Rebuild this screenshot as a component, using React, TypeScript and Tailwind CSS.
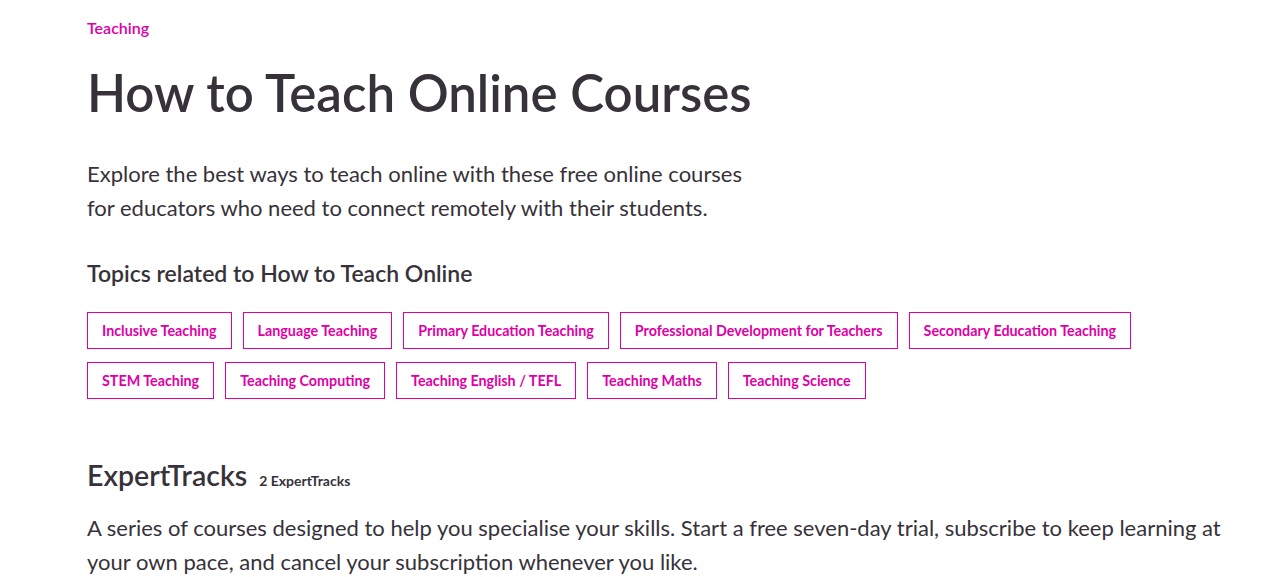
import React from "react";

const topics1 = [
  "Inclusive Teaching",
  "Language Teaching",
  "Primary Education Teaching",
  "Professional Development for Teachers",
  "Secondary Education Teaching",
];
const topics2 = [
  "STEM Teaching",
  "Teaching Computing",
  "Teaching English / TEFL",
  "Teaching Maths",
  "Teaching Science",
];

function Chip({ label }: { label: string }) {
  return (
    <a className="flex h-[37px] items-center border border-[#de00a5] px-[14px] text-[14.3px] font-bold text-[#de00a5]">
      {label}
    </a>
  );
}

export default function App() {
  return (
    <div className="min-h-[577px] w-full bg-white font-['Lato',sans-serif] text-[#37323a]">
      <div className="pl-[87px] pt-[18px]">
        <div className="text-[16px] font-semibold leading-[20px] text-[#de00a5]">Teaching</div>
        <h1 className="mt-[27px] text-[51px] font-semibold leading-[56px]">How to Teach Online Courses</h1>
        <p className="mt-[36px] w-[670px] text-[22px] leading-[34px]">
          Explore the best ways to teach online with these free online courses for educators who need to connect remotely with their students.
        </p>
        <h2 className="mt-[33px] text-[23px] font-semibold leading-[30px]">Topics related to How to Teach Online</h2>
        <div className="mt-[24px] flex flex-col gap-[13px]">
          <div className="flex gap-[11px]">
            {topics1.map((t) => (
              <Chip key={t} label={t} />
            ))}
          </div>
          <div className="flex gap-[11px]">
            {topics2.map((t) => (
              <Chip key={t} label={t} />
            ))}
          </div>
        </div>
        <div className="mt-[56px] flex items-baseline gap-[12px]">
          <h2 className="text-[28.5px] font-semibold leading-[40px]">ExpertTracks</h2>
          <span className="text-[14px] font-bold">2 ExpertTracks</span>
        </div>
        <p className="mt-[16px] w-[1165px] text-[22px] leading-[34px]">
          A series of courses designed to help you specialise your skills. Start a free seven-day trial, subscribe to keep learning at your own pace, and cancel your subscription whenever you like.
        </p>
      </div>
    </div>
  );
}
